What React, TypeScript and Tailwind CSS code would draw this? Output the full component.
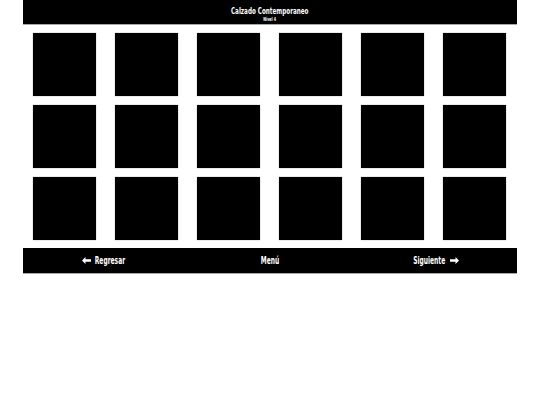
function Arrow({ dir }: { dir: "left" | "right" }) {
  return (
    <svg width="9" height="7" viewBox="0 0 9 7" className={dir === "right" ? "rotate-180" : ""}>
      <path d="M0 3.5 L3.5 0 L3.5 2.3 L9 2.3 L9 4.7 L3.5 4.7 L3.5 7 Z" fill="white" />
    </svg>
  );
}

export default function App() {
  const cells = Array.from({ length: 18 });
  const font = { fontFamily: '"DejaVu Sans Condensed", "DejaVu Sans", sans-serif' };
  return (
    <div className="w-[540px] h-[405px] bg-white">
      <div className="ml-[23px] w-[494px]" style={font}>
        <div className="h-[25px] bg-black border-b border-[#aaa] flex flex-col items-center pt-[6px] text-white font-bold leading-none">
          <span className="inline-block scale-x-[0.66] text-[9.5px] whitespace-nowrap">Calzado Contemporaneo</span>
          <span className="inline-block scale-x-[0.66] text-[5.5px] mt-[1px] whitespace-nowrap">Nivel 4</span>
        </div>
        <div className="grid grid-cols-[repeat(6,63px)] gap-x-[19px] gap-y-[9px] pl-[10px] py-[8px]">
          {cells.map((_, i) => (
            <div key={i} className="w-[63px] h-[63px] bg-black shadow-[0_0_1px_#888]" />
          ))}
        </div>
        <div className="h-[26px] bg-black border-b border-[#aaa] grid grid-cols-3 items-center text-white font-bold text-[10px] leading-none">
          <div className="flex items-center justify-center gap-[1px]">
            <Arrow dir="left" />
            <span className="inline-block scale-x-[0.66] whitespace-nowrap -mx-[5px]">Regresar</span>
          </div>
          <div className="flex items-center justify-center">
            <span className="inline-block scale-x-[0.66] whitespace-nowrap">Menú</span>
          </div>
          <div className="flex items-center justify-center gap-[1px]">
            <span className="inline-block scale-x-[0.66] whitespace-nowrap -mx-[5px]">Siguiente</span>
            <Arrow dir="right" />
          </div>
        </div>
      </div>
    </div>
  );
}
